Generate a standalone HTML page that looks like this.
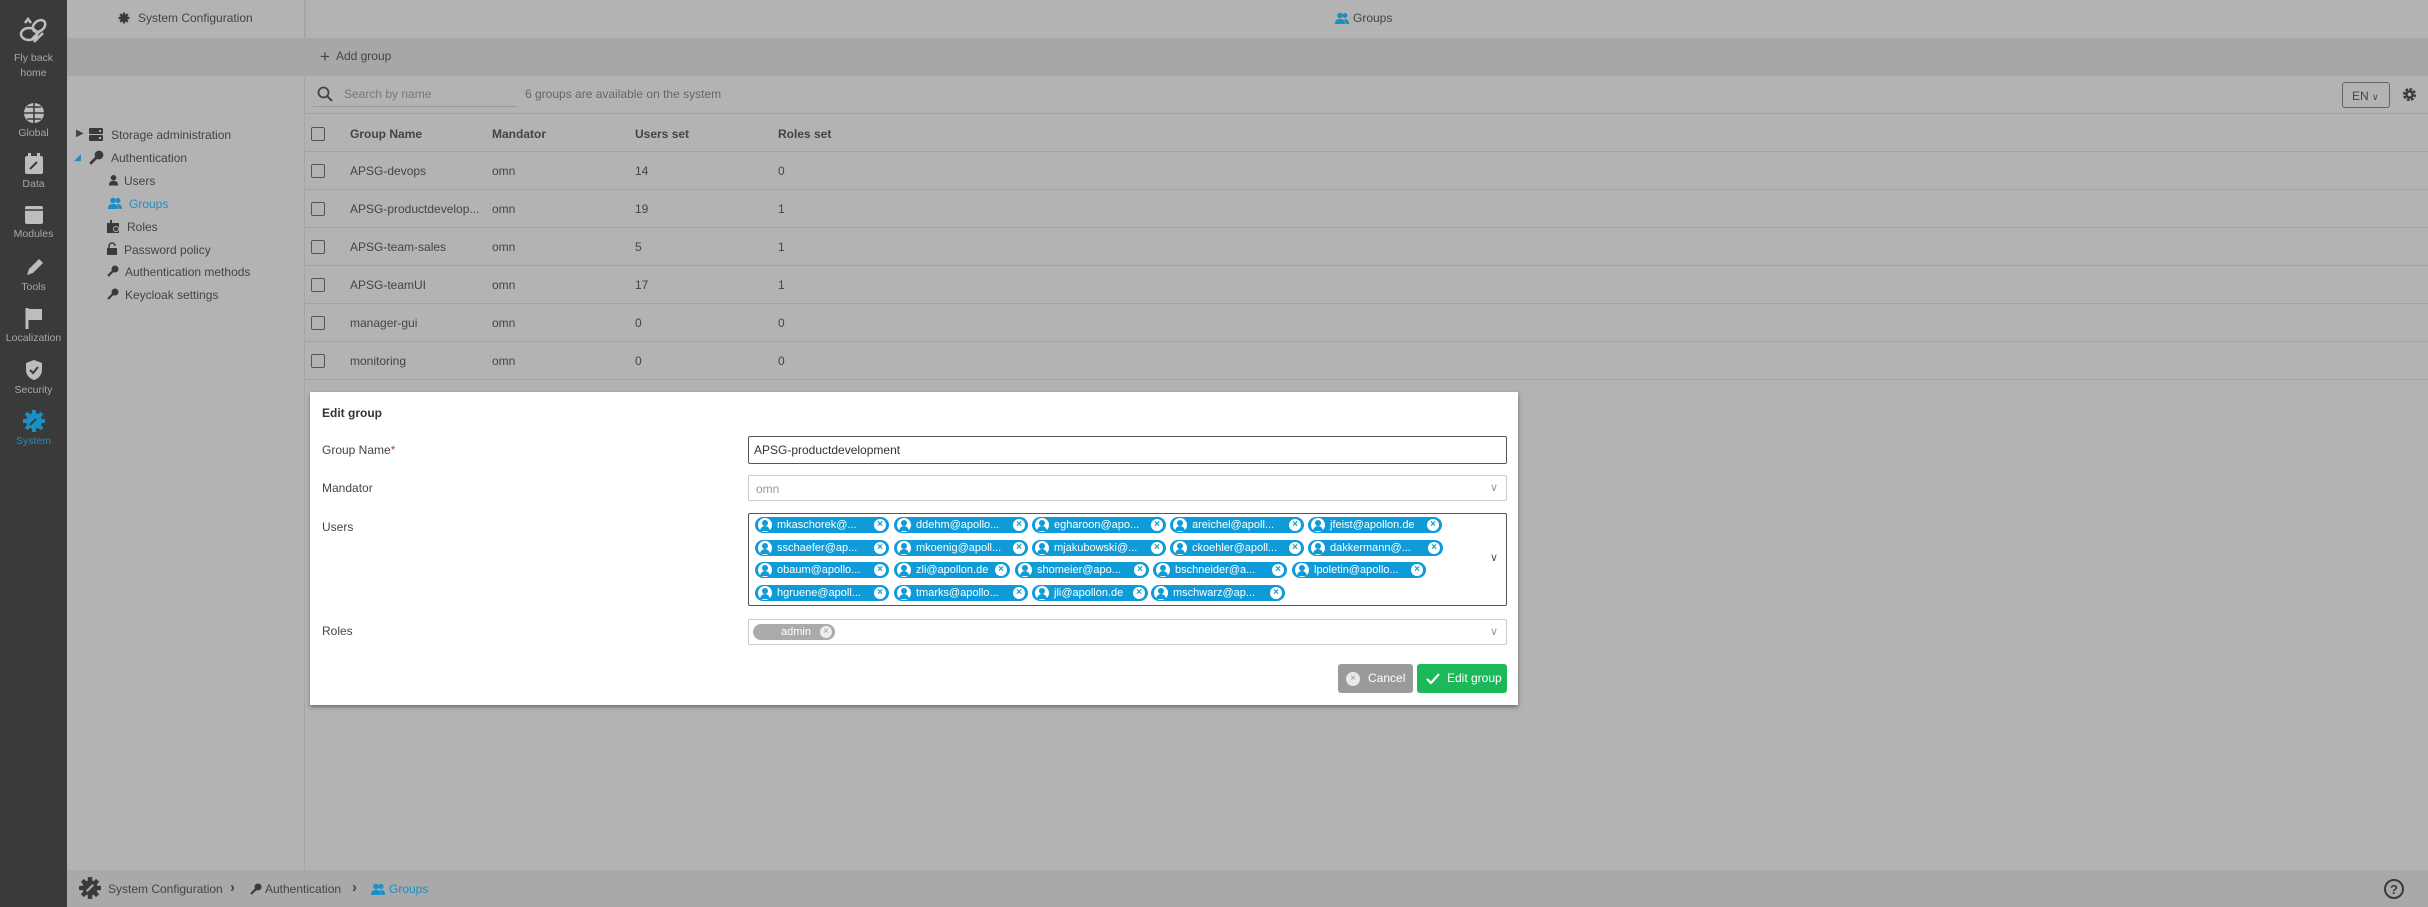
<!DOCTYPE html>
<html><head><meta charset="utf-8">
<style>
*{box-sizing:border-box;margin:0;padding:0}
body{width:2428px;height:907px;overflow:hidden;font-family:"Liberation Sans",sans-serif;background:#b3b3b3;color:#3c3c3c;position:relative;font-size:12px}
.abs{position:absolute}
#side{left:0;top:0;width:67px;height:907px;background:#3a3a3a}
.ni{position:absolute;left:0;width:67px;text-align:center;color:#a8a8a8;font-size:10.5px}
.ni svg{display:block;margin:0 auto 3px}
#tree{left:67px;top:0;width:238px;height:870px;border-right:1px solid #a6a6a6}
.band{left:67px;top:38px;width:2361px;height:38px;background:#a7a7a7}
.row{position:absolute;left:305px;width:2123px;height:38px;border-bottom:1px solid #a3a3a3}
.cb{position:absolute;left:311px;width:14px;height:14px;border:1.5px solid #555;border-radius:2px}
.cell{position:absolute;font-size:12px;color:#444}
.ti{position:absolute;font-size:12px;color:#444;white-space:nowrap}
.ic{position:absolute}
#modal{left:310px;top:392px;width:1208px;height:313px;background:#fff;box-shadow:0 2px 4px rgba(0,0,0,.4)}
.lab{position:absolute;left:12px;font-size:12px;color:#444}
.inp{position:absolute;left:438px;width:759px;border:1px solid #ccc;border-radius:2px;font-size:12px;color:#333}
.chip{position:absolute;height:16px;background:#0f9bd7;border-radius:8px;color:#fff;font-size:11px;line-height:16px;padding-left:22px;white-space:nowrap;overflow:hidden}
.chip:before{content:"";position:absolute;left:3px;top:1px;width:14px;height:14px;border-radius:7px;background:#fff}
.chip:after{content:"×";position:absolute;right:3px;top:2px;width:12px;height:12px;border-radius:6px;background:#fff;color:#0f9bd7;font-size:10px;line-height:12px;text-align:center;font-weight:bold}
.chip i{position:absolute;left:7px;top:3px;width:6px;height:6px;border-radius:3px;background:#0f9bd7}
.chip b{position:absolute;left:5px;top:9px;width:10px;height:5px;border-radius:5px 5px 0 0;background:#0f9bd7}
.chev{position:absolute;right:8px;color:#999;font-size:11px}
</style></head><body>
<svg width="0" height="0" style="position:absolute">
 <defs>
  <symbol id="key" viewBox="0 0 12 12"><circle cx="8" cy="4" r="3.5" fill="#3a3a3a"/><path d="M6 6L1 11" stroke="#3a3a3a" stroke-width="2.2"/></symbol>
  <symbol id="user" viewBox="0 0 12 12"><circle cx="6" cy="3.5" r="3" fill="#3a3a3a"/><path d="M1 12c0-4 2-5 5-5s5 1 5 5z" fill="#3a3a3a"/></symbol>
  <symbol id="users" viewBox="0 0 14 12"><circle cx="5" cy="3.5" r="2.8" fill="#1b8fc4"/><circle cx="10" cy="3.5" r="2.5" fill="#1b8fc4"/><path d="M0 12c0-4 2-5 5-5s5 1 5 5z" fill="#1b8fc4"/><path d="M9 7c3 0 5 1 5 5h-3z" fill="#1b8fc4"/></symbol>
 </defs>
</svg>
<div id="side" class="abs">
 <div class="ni" style="top:14px">
  <svg width="34" height="34" viewBox="0 0 34 34" fill="none" stroke="#bdbdbd" stroke-width="2.5"><ellipse cx="12" cy="20" rx="8" ry="6"/><ellipse cx="22" cy="12" rx="7" ry="5" transform="rotate(-40 22 12)"/><path d="M14 26l10-10M17 28l9-9"/><path d="M8 9l3-4 3 4" /></svg>
  <div style="line-height:15px">Fly back<br>home</div></div>
 <div class="ni" style="top:102px"><svg width="22" height="22" viewBox="0 0 22 22"><circle cx="11" cy="11" r="10" fill="#bdbdbd"/><path d="M1 11h20M11 1v20M4 5h14M4 17h14" stroke="#3a3a3a" stroke-width="1.5"/></svg>Global</div>
 <div class="ni" style="top:153px"><svg width="20" height="22" viewBox="0 0 20 22"><rect x="1" y="3" width="18" height="18" rx="2" fill="#bdbdbd"/><rect x="4" y="0" width="3" height="5" fill="#bdbdbd"/><rect x="13" y="0" width="3" height="5" fill="#bdbdbd"/><path d="M6 16l7-7" stroke="#3a3a3a" stroke-width="2"/></svg>Data</div>
 <div class="ni" style="top:205px"><svg width="20" height="20" viewBox="0 0 20 20"><rect x="1" y="1" width="18" height="18" rx="2" fill="#bdbdbd"/><path d="M1 5h18" stroke="#3a3a3a" stroke-width="1.5"/></svg>Modules</div>
 <div class="ni" style="top:256px"><svg width="20" height="22" viewBox="0 0 20 22"><path d="M3 19l2-6 10-10 4 4-10 10z" fill="#bdbdbd"/></svg>Tools</div>
 <div class="ni" style="top:307px"><svg width="20" height="22" viewBox="0 0 20 22"><path d="M3 1v21" stroke="#bdbdbd" stroke-width="3"/><path d="M4 2h14v11H4z" fill="#bdbdbd"/></svg>Localization</div>
 <div class="ni" style="top:359px"><svg width="20" height="22" viewBox="0 0 20 22"><path d="M10 1l8 3v7c0 5-4 9-8 10-4-1-8-5-8-10V4z" fill="#bdbdbd"/><path d="M6 11l3 3 5-6" stroke="#3a3a3a" stroke-width="2" fill="none"/></svg>Security</div>
 <div class="ni" style="top:410px;color:#1b8fc4"><svg width="22" height="22" viewBox="0 0 22 22"><circle cx="11" cy="11" r="8" fill="#1b8fc4"/><path d="M11 0v22M0 11h22M3 3l16 16M19 3L3 19" stroke="#1b8fc4" stroke-width="4"/><path d="M7 15l6-6" stroke="#3a3a3a" stroke-width="2"/></svg>System</div>
</div>
<div id="tree" class="abs"></div>
<div class="abs" style="left:305px;top:0;width:1px;height:76px;background:#a6a6a6"></div>
<svg class="abs" style="left:118px;top:12px" width="12" height="12" viewBox="0 0 22 22"><circle cx="11" cy="11" r="7" fill="#3a3a3a"/><path d="M11 1v20M1 11h20M4 4l14 14M18 4L4 18" stroke="#3a3a3a" stroke-width="4"/></svg>
<div class="abs" style="left:138px;top:11px;font-size:12px;color:#444">System Configuration</div>
<svg class="abs" style="left:1335px;top:12px" width="14" height="12"><use href="#users" style="--c:#3a3a3a"/></svg>
<div class="abs" style="left:1353px;top:11px;font-size:12px;color:#444">Groups</div>
<div class="abs band"></div>
<div class="abs" style="left:320px;top:47px;font-size:12px;color:#444"><span style="font-size:17px;vertical-align:-2px">+</span>&nbsp; Add group</div>
<svg class="abs" style="left:317px;top:86px" width="16" height="16" viewBox="0 0 16 16"><circle cx="6.5" cy="6.5" r="5" fill="none" stroke="#444" stroke-width="1.8"/><path d="M10 10l5 5" stroke="#444" stroke-width="2"/></svg>
<div class="abs" style="left:344px;top:87px;color:#777;font-size:12px">Search by name</div>
<div class="abs" style="left:313px;top:106px;width:204px;height:1px;background:#999"></div>
<div class="abs" style="left:525px;top:87px;color:#666;font-size:12px">6 groups are available on the system</div>
<div class="abs" style="left:2342px;top:82px;width:48px;height:26px;border:1px solid #666;border-radius:3px;font-size:12px;color:#444;padding:6px 0 0 9px">EN <span style="font-size:9px">∨</span></div>
<svg class="abs" style="left:2402px;top:87px" width="15" height="15" viewBox="0 0 16 16"><circle cx="8" cy="8" r="5" fill="none" stroke="#3a3a3a" stroke-width="4" stroke-dasharray="2.5 1.4"/><circle cx="8" cy="8" r="4.5" fill="#3a3a3a"/><circle cx="8" cy="8" r="2" fill="#b3b3b3"/></svg>
<div class="abs" style="left:305px;top:113px;width:2123px;height:1px;background:#a3a3a3"></div>
<!-- tree -->
<div class="ti" style="left:76px;top:128px;font-size:10px">▶</div>
<svg class="ic" style="left:89px;top:128px" width="14" height="13"><rect x="0" y="0" width="14" height="6" rx="1" fill="#3a3a3a"/><rect x="0" y="7" width="14" height="6" rx="1" fill="#3a3a3a"/><rect x="10" y="2" width="2" height="2" fill="#b3b3b3"/><rect x="10" y="9" width="2" height="2" fill="#b3b3b3"/></svg>
<div class="ti" style="left:111px;top:128px">Storage administration</div>
<div class="ti" style="left:74px;top:152px;color:#1b8fc4;font-size:9px">◢</div>
<svg class="ic" style="left:89px;top:150px" width="15" height="15"><use href="#key"/></svg>
<div class="ti" style="left:111px;top:151px">Authentication</div>
<svg class="ic" style="left:108px;top:174px" width="11" height="12"><use href="#user"/></svg>
<div class="ti" style="left:124px;top:174px">Users</div>
<svg class="ic" style="left:108px;top:197px" width="14" height="12"><use href="#users"/></svg>
<div class="ti" style="left:129px;top:197px;color:#1b8fc4">Groups</div>
<svg class="ic" style="left:107px;top:220px" width="13" height="13"><rect x="0" y="3" width="12" height="10" fill="#3a3a3a"/><rect x="3" y="0" width="2" height="4" fill="#3a3a3a"/><circle cx="9" cy="9" r="3" fill="#b3b3b3"/><circle cx="9" cy="9" r="2" fill="#3a3a3a"/></svg>
<div class="ti" style="left:127px;top:220px">Roles</div>
<svg class="ic" style="left:107px;top:242px" width="11" height="13"><path d="M2 6V4a3 3 0 0 1 6 0" stroke="#3a3a3a" stroke-width="1.5" fill="none"/><rect x="0" y="6" width="10" height="7" fill="#3a3a3a"/></svg>
<div class="ti" style="left:124px;top:243px">Password policy</div>
<svg class="ic" style="left:107px;top:265px" width="12" height="12"><use href="#key"/></svg>
<div class="ti" style="left:125px;top:265px">Authentication methods</div>
<svg class="ic" style="left:107px;top:288px" width="12" height="12"><use href="#key"/></svg>
<div class="ti" style="left:125px;top:288px">Keycloak settings</div>
<!-- table -->
<div class="row" style="top:114px"></div>
<div class="cb" style="top:127px"></div>
<div class="cell" style="left:350px;top:127px;font-weight:bold">Group Name</div>
<div class="cell" style="left:492px;top:127px;font-weight:bold">Mandator</div>
<div class="cell" style="left:635px;top:127px;font-weight:bold">Users set</div>
<div class="cell" style="left:778px;top:127px;font-weight:bold">Roles set</div>

<div class="row" style="top:152px"></div><div class="cb" style="top:164px"></div><div class="cell" style="left:350px;top:164px">APSG-devops</div><div class="cell" style="left:492px;top:164px">omn</div><div class="cell" style="left:635px;top:164px">14</div><div class="cell" style="left:778px;top:164px">0</div>
<div class="row" style="top:190px"></div><div class="cb" style="top:202px"></div><div class="cell" style="left:350px;top:202px">APSG-productdevelop...</div><div class="cell" style="left:492px;top:202px">omn</div><div class="cell" style="left:635px;top:202px">19</div><div class="cell" style="left:778px;top:202px">1</div>
<div class="row" style="top:228px"></div><div class="cb" style="top:240px"></div><div class="cell" style="left:350px;top:240px">APSG-team-sales</div><div class="cell" style="left:492px;top:240px">omn</div><div class="cell" style="left:635px;top:240px">5</div><div class="cell" style="left:778px;top:240px">1</div>
<div class="row" style="top:266px"></div><div class="cb" style="top:278px"></div><div class="cell" style="left:350px;top:278px">APSG-teamUI</div><div class="cell" style="left:492px;top:278px">omn</div><div class="cell" style="left:635px;top:278px">17</div><div class="cell" style="left:778px;top:278px">1</div>
<div class="row" style="top:304px"></div><div class="cb" style="top:316px"></div><div class="cell" style="left:350px;top:316px">manager-gui</div><div class="cell" style="left:492px;top:316px">omn</div><div class="cell" style="left:635px;top:316px">0</div><div class="cell" style="left:778px;top:316px">0</div>
<div class="row" style="top:342px"></div><div class="cb" style="top:354px"></div><div class="cell" style="left:350px;top:354px">monitoring</div><div class="cell" style="left:492px;top:354px">omn</div><div class="cell" style="left:635px;top:354px">0</div><div class="cell" style="left:778px;top:354px">0</div>
<!-- modal -->
<div id="modal" class="abs">
 <div class="lab" style="top:14px;font-weight:bold;color:#333">Edit group</div>
 <div class="lab" style="top:51px">Group Name<span style="color:#c33">*</span></div>
 <div class="lab" style="top:89px">Mandator</div>
 <div class="lab" style="top:128px">Users</div>
 <div class="lab" style="top:232px">Roles</div>
 <div class="inp" style="top:44px;height:28px;border:1.5px solid #555;padding:6px 5px">APSG-productdevelopment</div>
 <div class="inp" style="top:83px;height:26px;padding:6px 7px;color:#999">omn<span class="chev" style="top:5px">∨</span></div>
 <div class="inp" style="top:121px;height:93px;border:1.5px solid #555"><span class="chev" style="top:37px;color:#555">∨</span></div>
 <div class="inp" style="top:227px;height:26px"><span class="chev" style="top:5px">∨</span>
  <div style="position:absolute;left:4px;top:4px;height:16px;width:82px;background:#aaa;border-radius:8px;color:#fff;font-size:11px;line-height:16px;padding-left:28px">admin<span style="position:absolute;right:3px;top:2px;width:12px;height:12px;border-radius:6px;background:#eee;color:#999;font-size:10px;line-height:12px;text-align:center">×</span></div></div>
 <div class="abs" style="left:1028px;top:272px;width:75px;height:29px;background:#9a9a9a;border-radius:3px;color:#fff;font-size:12px;line-height:29px;padding-left:30px"><span style="position:absolute;left:8px;top:8px;width:14px;height:14px;border-radius:7px;background:#e8e8e8;color:#999;font-size:10px;line-height:14px;text-align:center">×</span>Cancel</div>
 <div class="abs" style="left:1107px;top:272px;width:90px;height:29px;background:#1db85a;border-radius:3px;color:#fff;font-size:12px;line-height:29px;padding-left:30px"><svg style="position:absolute;left:9px;top:9px" width="14" height="11" viewBox="0 0 14 11"><path d="M1 6l4 4 8-9" stroke="#fff" stroke-width="2.2" fill="none"/></svg>Edit group</div>
</div>
<!-- chips -->
<div class="chip" style="left:755px;top:517px;width:134px"><i></i><b></b>mkaschorek@...</div>
<div class="chip" style="left:894px;top:517px;width:134px"><i></i><b></b>ddehm@apollo...</div>
<div class="chip" style="left:1032px;top:517px;width:134px"><i></i><b></b>egharoon@apo...</div>
<div class="chip" style="left:1170px;top:517px;width:134px"><i></i><b></b>areichel@apoll...</div>
<div class="chip" style="left:1308px;top:517px;width:134px"><i></i><b></b>jfeist@apollon.de</div>
<div class="chip" style="left:755px;top:540px;width:134px"><i></i><b></b>sschaefer@ap...</div>
<div class="chip" style="left:894px;top:540px;width:134px"><i></i><b></b>mkoenig@apoll...</div>
<div class="chip" style="left:1032px;top:540px;width:134px"><i></i><b></b>mjakubowski@...</div>
<div class="chip" style="left:1170px;top:540px;width:134px"><i></i><b></b>ckoehler@apoll...</div>
<div class="chip" style="left:1308px;top:540px;width:135px"><i></i><b></b>dakkermann@...</div>
<div class="chip" style="left:755px;top:562px;width:134px"><i></i><b></b>obaum@apollo...</div>
<div class="chip" style="left:894px;top:562px;width:116px"><i></i><b></b>zli@apollon.de</div>
<div class="chip" style="left:1015px;top:562px;width:134px"><i></i><b></b>shomeier@apo...</div>
<div class="chip" style="left:1153px;top:562px;width:134px"><i></i><b></b>bschneider@a...</div>
<div class="chip" style="left:1292px;top:562px;width:134px"><i></i><b></b>lpoletin@apollo...</div>
<div class="chip" style="left:755px;top:585px;width:134px"><i></i><b></b>hgruene@apoll...</div>
<div class="chip" style="left:894px;top:585px;width:134px"><i></i><b></b>tmarks@apollo...</div>
<div class="chip" style="left:1032px;top:585px;width:116px"><i></i><b></b>jli@apollon.de</div>
<div class="chip" style="left:1151px;top:585px;width:134px"><i></i><b></b>mschwarz@ap...</div>
<!-- bottom -->
<div class="abs" style="left:67px;top:870px;width:2361px;height:37px;background:#a9a9a9"></div>
<svg class="abs" style="left:78px;top:876px" width="24" height="24" viewBox="0 0 22 22"><circle cx="11" cy="11" r="7" fill="#3a3a3a"/><path d="M11 1v20M1 11h20M4 4l14 14M18 4L4 18" stroke="#3a3a3a" stroke-width="4"/><path d="M8 14l6-6" stroke="#a9a9a9" stroke-width="2"/></svg>
<div class="abs" style="left:108px;top:882px;font-size:12px;color:#444">System Configuration</div>
<div class="abs" style="left:230px;top:879px;font-size:15px;color:#444;font-weight:bold">›</div>
<svg class="abs" style="left:250px;top:883px" width="12" height="12"><use href="#key"/></svg>
<div class="abs" style="left:265px;top:882px;font-size:12px;color:#444">Authentication</div>
<div class="abs" style="left:352px;top:879px;font-size:15px;color:#444;font-weight:bold">›</div>
<svg class="abs" style="left:371px;top:883px" width="14" height="12"><use href="#users"/></svg>
<div class="abs" style="left:389px;top:882px;font-size:12px;color:#1b8fc4">Groups</div>
<div class="abs" style="left:2384px;top:879px;width:20px;height:20px;border:2px solid #3a3a3a;border-radius:10px;text-align:center;font-weight:bold;font-size:13px;line-height:17px;color:#3a3a3a">?</div>
</body></html>
